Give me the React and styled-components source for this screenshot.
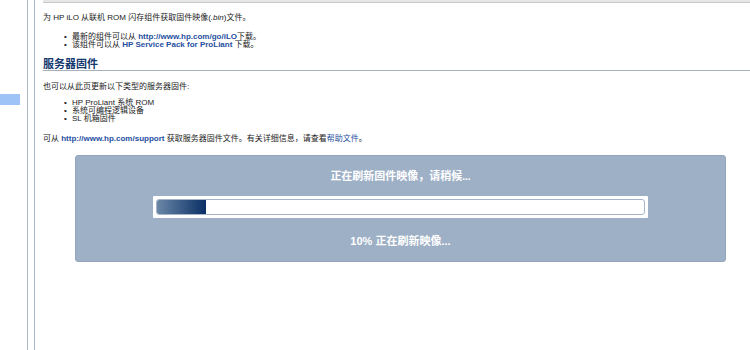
import React from "react";
import styled, { createGlobalStyle } from "styled-components";

const Global = createGlobalStyle`
  html, body { margin: 0; padding: 0; background: #fff; }
  body { font-family: "Liberation Sans", Arial, "Noto Sans CJK SC", sans-serif; color: #222; }
`;

const Page = styled.div`
  display: flex;
  width: 750px;
  height: 350px;
  overflow: hidden;
`;

const Nav = styled.div`
  width: 27px;
  flex: none;
`;

const NavItem = styled.div`
  margin-top: 94px;
  width: 20px;
  height: 11px;
  background: #9ec4f7;
`;

const Rails = styled.div`
  width: 6px;
  flex: none;
  border-left: 1px solid #a9b7c8;
  border-right: 1px solid #a9b7c8;
`;

const Content = styled.div`
  flex: 1;
  padding-left: 8px;
  font-size: 8px;
  line-height: 8px;
`;

const TopBar = styled.div`
  height: 2px;
  background: #e6e6e6;
  border-bottom: 1px solid #c9c9c9;
`;

const Para = styled.p`
  margin: ${(p) => p.$mt}px 0 0;
  white-space: nowrap;
`;

const List = styled.ul`
  margin: ${(p) => p.$mt}px 0 0;
  padding: 0 0 0 21px;
  list-style: none;
`;

const Item = styled.li`
  display: flex;
  white-space: nowrap;
`;

const Dot = styled.span`
  width: 8px;
  flex: none;
`;

const Link = styled.a`
  color: #1f4fa0;
  font-weight: ${(p) => (p.$bold ? 700 : 400)};
  text-decoration: none;
`;

const Heading = styled.h2`
  margin: 9px 0 0;
  font-size: 11px;
  line-height: 12px;
  font-weight: 700;
  color: #12386e;
  border-bottom: 1px solid #a9b0bd;
`;

const Panel = styled.div`
  margin: 12px 24px 0 32px;
  height: 107px;
  box-sizing: border-box;
  background: #9eb0c5;
  border: 1px solid #93a6bb;
  border-radius: 3px;
  padding-top: 13px;
  display: flex;
  flex-direction: column;
  align-items: center;
  color: #fff;
  font-family: "Liberation Serif", "Noto Sans CJK SC", serif;
`;

const PanelTitle = styled.div`
  font-size: 11px;
  line-height: 14px;
  font-weight: 700;
`;

const Track = styled.div`
  margin-top: 13px;
  width: 495px;
  height: 22px;
  box-sizing: border-box;
  background: #fff;
  padding: 3px;
  border-radius: 1px;
`;

const Inner = styled.div`
  height: 100%;
  box-sizing: border-box;
  border: 1px solid #a6b6c8;
  border-radius: 3px;
  overflow: hidden;
`;

const Fill = styled.div`
  height: 100%;
  background: linear-gradient(to right, #6a87a6, #0a2f66);
`;

const Status = styled.div`
  margin-top: 16px;
  font-size: 11px;
  line-height: 14px;
  font-weight: 700;
  font-family: "Liberation Sans", "Noto Sans CJK SC", sans-serif;
`;

export default function App() {
  const pct = 10;
  return (
    <>
      <Global />
      <Page>
        <Nav>
          <NavItem />
        </Nav>
        <Rails />
        <Content>
          <TopBar />
          <Para $mt={11}>为 HP iLO 从联机 ROM 闪存组件获取固件映像(<i>.bin</i>)文件。</Para>
          <List $mt={11}>
            <Item><Dot>•</Dot><span>最新的组件可以从 <Link $bold href="#">http://www.hp.com/go/iLO</Link>下载。</span></Item>
            <Item><Dot>•</Dot><span>该组件可以从 <Link $bold href="#">HP Service Pack for ProLiant</Link> 下载。</span></Item>
          </List>
          <Heading>服务器固件</Heading>
          <Para $mt={12}>也可以从此页更新以下类型的服务器固件:</Para>
          <List $mt={8}>
            <Item><Dot>•</Dot><span>HP ProLiant 系统 ROM</span></Item>
            <Item><Dot>•</Dot><span>系统可编程逻辑设备</span></Item>
            <Item><Dot>•</Dot><span>SL 机箱固件</span></Item>
          </List>
          <Para $mt={12}>
            可从 <Link $bold href="#">http://www.hp.com/support</Link> 获取服务器固件文件。有关详细信息，请查看<Link href="#">帮助文件</Link>。
          </Para>
          <Panel>
            <PanelTitle>正在刷新固件映像，请稍候...</PanelTitle>
            <Track>
              <Inner>
                <Fill style={{ width: `${pct}%` }} />
              </Inner>
            </Track>
            <Status>{pct}% 正在刷新映像...</Status>
          </Panel>
        </Content>
      </Page>
    </>
  );
}
